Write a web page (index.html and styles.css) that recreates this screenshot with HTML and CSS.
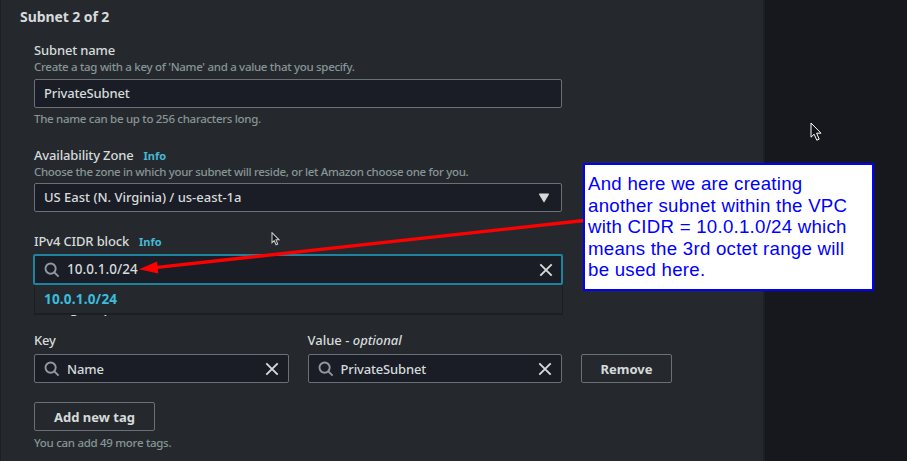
FILE: index.html
```html
<!DOCTYPE html>
<html lang="en">
<head>
<meta charset="utf-8">
<title>Create subnet</title>
<link rel="stylesheet" href="styles.css">
</head>
<body>
<svg class="defs" width="0" height="0">
  <symbol id="search" viewBox="0 0 16 16"><circle cx="6.6" cy="6.6" r="5.1"/><path d="M10.3 10.3 14.6 14.6"/></symbol>
  <symbol id="close" viewBox="0 0 14 14"><path d="M1.3 1.3 12.7 12.7M12.7 1.3 1.3 12.7"/></symbol>
  <symbol id="pointer" viewBox="0 0 12 20"><path d="M1 1V15.2L4.1 12.2L6.8 18.2L9.2 17.2L6.6 11.2H11Z"/></symbol>
</svg>
<main class="panel">
  <h2 class="title">Subnet 2 of 2</h2>
  <form class="form">
    <section class="field name-field">
      <div class="label">Subnet name</div>
      <div class="desc">Create a tag with a key of 'Name' and a value that you specify.</div>
      <div class="input"><span class="value">PrivateSubnet</span></div>
      <div class="hint">The name can be up to 256 characters long.</div>
    </section>
    <section class="field zone-field">
      <div class="label"><span>Availability Zone</span><a class="info">Info</a></div>
      <div class="desc zone-desc">Choose the zone in which your subnet will reside, or let Amazon choose one for you.</div>
      <div class="input"><span class="value region">US East (N. Virginia) / us-east-1a</span>
        <svg class="caret" viewBox="0 0 10 9"><path d="M1 1H9L5 7.8Z"/></svg></div>
    </section>
    <section class="field cidr-field">
      <div class="label"><span>IPv4 CIDR block</span><a class="info">Info</a></div>
      <div class="input focused"><svg class="search"><use href="#search"/></svg><span class="value address">10.0.1.0/24</span><svg class="close"><use href="#close"/></svg></div>
      <div class="options">10.0.1.0/24</div>
      <div class="tags-title">Tags - optional</div>
    </section>
    <section class="tag-row">
      <div class="tag-cell">
        <div class="label">Key</div>
        <div class="input"><svg class="search"><use href="#search"/></svg><span class="value">Name</span><svg class="close"><use href="#close"/></svg></div>
      </div>
      <div class="tag-cell">
        <div class="label"><span class="value-label">Value - <i>optional</i></span></div>
        <div class="input"><svg class="search"><use href="#search"/></svg><span class="value">PrivateSubnet</span><svg class="close"><use href="#close"/></svg></div>
      </div>
      <button type="button" class="button remove">Remove</button>
    </section>
    <button type="button" class="button add">Add new tag</button>
    <div class="hint tag-hint">You can add 49 more tags.</div>
  </form>
</main>
<svg class="pointer small"><use href="#pointer"/></svg>
<svg class="pointer large"><use href="#pointer"/></svg>
<svg class="arrow" viewBox="0 0 907 461"><path class="shaft" d="M584 220.5 155 267.6"/><path class="head" d="M139 269.3 157 261.5 158.3 273.5Z"/></svg>
<aside class="callout">And here we are creating<br>another subnet within the VPC<br>with CIDR = 10.0.1.0/24 which<br>means the 3rd octet range will<br>be used here.</aside>
</body>
</html>
```

FILE: styles.css
```css
* { box-sizing: border-box; }
body {
  margin: 0;
  width: 907px;
  height: 461px;
  overflow: hidden;
  position: relative;
  background: #17181d;
  color: #d5dbdb;
  font: 500 13px/18px "Noto Sans", "Open Sans", sans-serif;
}
.defs { position: absolute; }
.panel {
  width: 765px;
  height: 461px;
  background: #25292d;
  border-left: 1px solid #1b1e22;
  border-right: 2px solid #1c1f23;
  padding: 8px 0 0 18px;
}
.title { margin: 0 0 0 1px; height: 18px; font-size: 14px; font-weight: 700; line-height: 18px; letter-spacing: -0.08px; }
.form { margin-left: 15px; width: 640px; }
.field { width: 528px; }
.name-field { padding-top: 15px; height: 120px; }
.zone-field { height: 86px; }
.cidr-field { height: 100px; position: relative; }
.label { height: 18px; display: flex; align-items: center; letter-spacing: -0.15px; white-space: nowrap; }
.value-label { letter-spacing: 0; }
.info { margin: 2px 0 0 10px; color: #44b9d6; font-size: 11px; font-weight: 700; letter-spacing: 0; }
.desc, .hint { color: #879596; font-size: 11.5px; line-height: 16px; letter-spacing: -0.3px; white-space: nowrap; }
.desc { height: 16px; }
.zone-desc { letter-spacing: -0.33px; }
.name-field .input { margin-top: 4px; }
.zone-field .input { margin-top: 3px; }
.input {
  height: 29px;
  display: flex;
  align-items: center;
  padding: 0 9px;
  background: #1a1d26;
  border: 1px solid #687078;
  border-radius: 2px;
  white-space: nowrap;
}
.value { flex: 1; letter-spacing: -0.15px; }
.name-field .value, .zone-field .value { padding-bottom: 1px; }
.region { letter-spacing: -0.01px; }
.address { font-size: 13.5px; letter-spacing: 0.04px; padding-bottom: 1px; }
.hint { padding-top: 3px; }
.tag-hint { padding-top: 4px; }
.search { width: 16px; height: 16px; margin-right: 7px; fill: none; stroke: #8f999f; stroke-width: 1.9; flex: none; }
.close { width: 14px; height: 14px; fill: none; stroke: #d5dbdb; stroke-width: 1.9; flex: none; }
.caret { width: 12px; height: 10px; margin-right: 2px; fill: #d5dbdb; stroke: #d5dbdb; stroke-width: 1; stroke-linejoin: round; }
.focused { margin: 4px -1px 0; padding: 0 8px 0 9px; height: 31px; width: 530px; border: 2px solid #1f83a0; }
.options {
  position: absolute;
  z-index: 1;
  left: 0;
  top: 53px;
  width: 529px;
  height: 30px;
  padding: 5px 9px 4px;
  background: #25292d;
  border: solid #1b1f23;
  border-width: 0 1px 2px;
  color: #44b9d6;
  font-size: 13.5px;
  letter-spacing: 0.2px;
  font-weight: 700;
  text-shadow: 0 0 2px #073a50;
}
.tags-title { margin: 14px 0 0 22px; line-height: 18px; height: 18px; font-weight: 600; }
.tag-row { display: flex; gap: 19px; align-items: flex-end; margin-top: -1px; height: 52px; width: 638px; }
.tag-cell { width: 254.5px; }
.tag-cell .input { margin-top: 5px; }
.button {
  display: flex;
  align-items: center;
  justify-content: center;
  height: 29px;
  padding: 0;
  background: transparent;
  border: 1px solid #687078;
  border-radius: 2px;
  color: #d5dbdb;
  font: 700 13px/18px "Noto Sans", "Open Sans", sans-serif;
  white-space: nowrap;
}
.remove { width: 91px; }
.add { width: 121px; margin-top: 19px; }
.pointer { position: absolute; fill: #111316; stroke: #fff; stroke-width: 1; }
.small { left: 271px; top: 232px; width: 9px; height: 14px; stroke: #c9cdd0; stroke-width: 1.5; }
.large { left: 810px; top: 122px; width: 12px; height: 20px; }
.arrow { position: absolute; left: 0; top: 0; width: 907px; height: 461px; }
.shaft { stroke: #f00; stroke-width: 3.3; }
.head { fill: #f00; }
.callout {
  position: absolute;
  left: 583px;
  top: 163px;
  width: 291px;
  height: 128px;
  padding: 8px 0 0 3px;
  background: #fff;
  border: 2px solid #00f;
  color: #00f;
  font: 18.67px/21.5px "Liberation Sans", sans-serif;
  letter-spacing: 0.25px;
  white-space: nowrap;
}
```
